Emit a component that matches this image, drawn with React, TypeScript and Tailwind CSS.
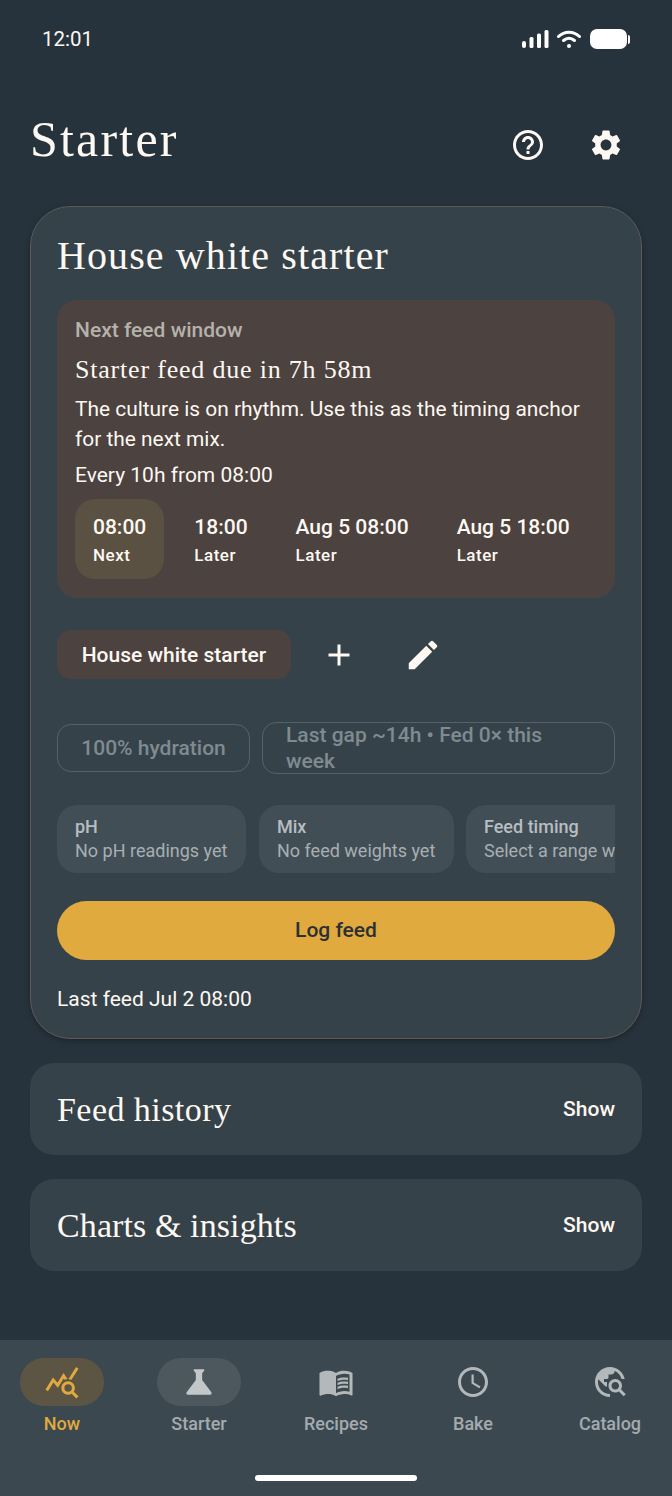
import { MdAdd, MdEdit, MdHelpOutline, MdSettings, MdQueryStats, MdScience, MdMenuBook, MdAccessTime, MdTravelExplore } from "react-icons/md";

const serif = "font-['Liberation_Serif',serif]";

const slots = [
  { time: "08:00", label: "Next", active: true },
  { time: "18:00", label: "Later", active: false },
  { time: "Aug 5 08:00", label: "Later", active: false },
  { time: "Aug 5 18:00", label: "Later", active: false },
];

const metrics = [
  { title: "pH", value: "No pH readings yet", width: "w-[189px]" },
  { title: "Mix", value: "No feed weights yet", width: "w-[195px]" },
  { title: "Feed timing", value: "Select a range with feeds", width: "w-[230px]" },
];

const tabs = [
  { label: "Now", Icon: MdQueryStats, active: true },
  { label: "Starter", Icon: MdScience, pill: true },
  { label: "Recipes", Icon: MdMenuBook },
  { label: "Bake", Icon: MdAccessTime },
  { label: "Catalog", Icon: MdTravelExplore },
];

function StatusIcons() {
  return (
    <div className="flex items-center">
      <svg width="27" height="18" viewBox="0 0 27 18" fill="white">
        <rect x="0" y="11" width="4" height="7" rx="2" />
        <rect x="7.5" y="7" width="4" height="11" rx="1.5" />
        <rect x="15" y="3.5" width="4" height="14.5" rx="1.5" />
        <rect x="22.5" y="0" width="4" height="18" rx="1.5" />
      </svg>
      <svg width="24" height="18" viewBox="0 0 24 18" fill="none" stroke="white" strokeWidth="3" strokeLinecap="round" className="ml-[8px]">
        <path d="M1.5 6.5C7.5 .8 16.5 .8 22.5 6.5" />
        <path d="M6.5 10.5C9.8 7.6 14.2 7.6 17.5 10.5" />
        <circle cx="12" cy="16" r="2" fill="white" stroke="none" />
      </svg>
      <div className="flex items-center ml-[9px]">
        <div className="w-[37px] h-[20px] rounded-[7px] bg-white" />
        <div className="w-[2px] h-[9px] ml-[1px] rounded-r-sm bg-white" />
      </div>
    </div>
  );
}

function CollapsedCard({ title, tracking }: { title: string; tracking: string }) {
  return (
    <section className="h-[92px] rounded-[24px] bg-[#36424a] px-[27px] flex items-center justify-between">
      <h2 className={`${serif} ${tracking} text-[34px] text-[#fdf8f1]`}>{title}</h2>
      <span className="pt-[2px] text-[21px] font-medium text-[#fdf8f1]">Show</span>
    </section>
  );
}

export default function App() {
  return (
    <div className="w-[672px] h-[1496px] overflow-hidden flex flex-col bg-[#27333c] font-['Roboto',sans-serif] text-[#fdf8f1]">
      <div className="h-[78px] pl-[42px] pr-[42px] flex items-center justify-between">
        <span className="text-[20.5px] leading-none">12:01</span>
        <StatusIcons />
      </div>

      <header className="h-[128px] pl-[30px] pr-[48px] flex items-center justify-between pt-[6px]">
        <h1 className={`${serif} text-[50px] tracking-[2.2px] leading-none -mt-[12px]`}>Starter</h1>
        <div className="flex items-center gap-[42px]">
          <MdHelpOutline size={36} />
          <MdSettings size={36} />
        </div>
      </header>

      <main className="px-[30px] flex flex-col gap-[24px]">
        <section className="h-[833px] rounded-[40px] border border-[#5a5b58] bg-[#36424a] px-[26px] pt-[26px] shadow-[0_2px_6px_rgba(0,0,0,0.3)]">
          <h2 className={`${serif} text-[40px] leading-[46px] tracking-[1.1px]`}>House white starter</h2>

          <div className="mt-[21px] h-[298px] rounded-[20px] bg-[#4c423f] px-[18px] pt-[15px]">
            <p className="text-[21px] leading-[30px] font-medium text-[#b5b1ab]">Next feed window</p>
            <p className={`${serif} mt-[10px] text-[26px] leading-[30px] tracking-[0.8px]`}>Starter feed due in 7h 58m</p>
            <p className="mt-[9px] text-[20.9px] leading-[30px]">
              The culture is on rhythm. Use this as the timing anchor for the next mix.
            </p>
            <p className="mt-[6px] text-[21px] leading-[30px]">Every 10h from 08:00</p>
            <div className="mt-[9px] flex gap-[12px]">
              {slots.map((slot) => (
                <div
                  key={slot.time}
                  className={`h-[80px] px-[18px] pt-[2px] rounded-[20px] flex flex-col justify-center gap-[2px] ${slot.active ? "bg-[#5a5142]" : ""}`}
                >
                  <span className="text-[21px] leading-[28px] font-medium">{slot.time}</span>
                  <span className="text-[17px] leading-[24px] font-medium tracking-[0.5px]">{slot.label}</span>
                </div>
              ))}
            </div>
          </div>

          <div className="mt-[32px] flex items-center">
            <div className="w-[234px] h-[49px] pt-[2px] rounded-[14px] bg-[#4c423f] flex items-center justify-center text-[21px] font-medium">
              House white starter
            </div>
            <MdAdd size={36} className="ml-[30px]" />
            <MdEdit size={38} className="ml-[47px]" />
          </div>

          <div className="mt-[43px] flex items-center gap-[12px] text-[21px] text-[#7f8b90]">
            <div className="w-[193px] h-[48px] pt-[2px] shrink-0 rounded-[14px] border border-[#56626a] flex items-center justify-center font-medium">
              100% hydration
            </div>
            <div className="flex-1 h-[52px] rounded-[14px] border border-[#56626a] px-[23px] flex items-center font-medium leading-[26px]">
              <span className="pr-[40px]">Last gap ~14h • Fed 0× this week</span>
            </div>
          </div>

          <div className="mt-[31px] flex gap-[12px] overflow-hidden">
            {metrics.map((metric, i) => (
              <div key={metric.title} className={`${metric.width} ${i === 1 ? "ml-px" : ""} shrink-0 h-[68px] rounded-[20px] bg-[#424e55] px-[18px] flex flex-col justify-center`}>
                <span className="text-[18px] leading-[24px] font-medium text-[#b7bdc0] whitespace-nowrap">{metric.title}</span>
                <span className="text-[18px] leading-[24px] text-[#a7afb3] whitespace-nowrap">{metric.value}</span>
              </div>
            ))}
          </div>

          <button className="mt-[28px] w-full h-[59px] rounded-full bg-[#e0aa3e] text-[21px] font-medium text-[#2b3036]">
            Log feed
          </button>
          <p className="mt-[24px] text-[21px] leading-[30px]">Last feed Jul 2 08:00</p>
        </section>

        <CollapsedCard title="Feed history" tracking="tracking-[0.45px]" />
        <CollapsedCard title="Charts & insights" tracking="tracking-[0.1px]" />
      </main>

      <nav className="mt-auto h-[156px] bg-[#3c484f] px-[20px] pt-[18px] flex flex-col">
        <div className="flex justify-between">
          {tabs.map(({ label, Icon, active, pill }) => (
            <div key={label} className="w-[84px] flex flex-col items-center">
              <div className={`w-[84px] h-[48px] rounded-full flex items-center justify-center ${active ? "bg-[#5d5544] text-[#e0aa3e]" : pill ? "bg-[#4c575e] text-[#c3c7c9]" : "text-[#b3b8ba]"}`}>
                <Icon size={pill ? 38 : 36} />
              </div>
              <span className={`mt-[6px] text-[18px] leading-[24px] font-medium whitespace-nowrap ${active ? "text-[#e0aa3e]" : "text-[#a4abaf]"}`}>{label}</span>
            </div>
          ))}
        </div>
        <div className="mt-[39px] mx-auto w-[162px] h-[6px] rounded-full bg-white" />
      </nav>
    </div>
  );
}
